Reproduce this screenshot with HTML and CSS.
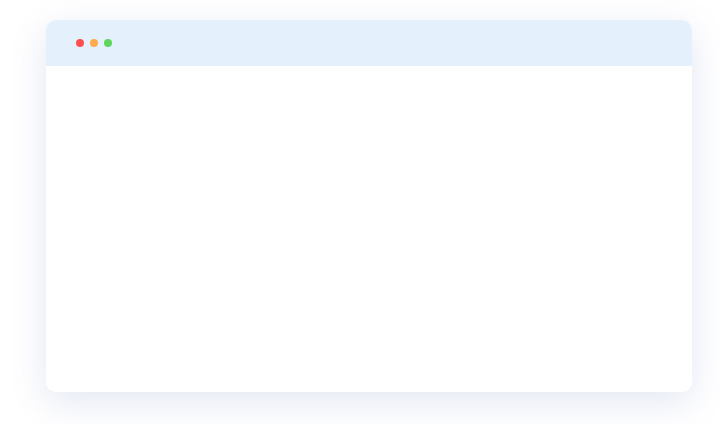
FILE: index.html
```html
<!DOCTYPE html>
<html lang="en">
<head>
<meta charset="utf-8">
<title>Window</title>
<link rel="stylesheet" href="styles.css">
</head>
<body>
  <div class="stage">
    <div class="window">
      <div class="titlebar">
        <span class="dot dot-red"></span>
        <span class="dot dot-yellow"></span>
        <span class="dot dot-green"></span>
      </div>
      <div class="content"></div>
    </div>
  </div>
</body>
</html>
```
FILE: styles.css
```css
html, body {
  margin: 0;
  padding: 0;
  background: #ffffff;
  font-family: "Liberation Sans", Arial, sans-serif;
}
.stage {
  width: 720px;
  height: 424px;
  padding: 20px 0 0 46px;
  box-sizing: border-box;
}
.window {
  width: 646px;
  height: 372px;
  border-radius: 10px;
  background: #ffffff;
  overflow: hidden;
  display: flex;
  flex-direction: column;
  box-shadow: 0 10px 36px rgba(90, 105, 180, 0.16);
}
.titlebar {
  height: 46px;
  background: #e5f0fd;
  display: flex;
  align-items: center;
  gap: 6px;
  padding-left: 30px;
  flex: none;
}
.dot {
  width: 8px;
  height: 8px;
  border-radius: 50%;
  display: block;
}
.dot-red { background: #ff4f4f; }
.dot-yellow { background: #ffab4d; }
.dot-green { background: #5ed65a; }
.content {
  flex: 1;
  background: #ffffff;
}
```
